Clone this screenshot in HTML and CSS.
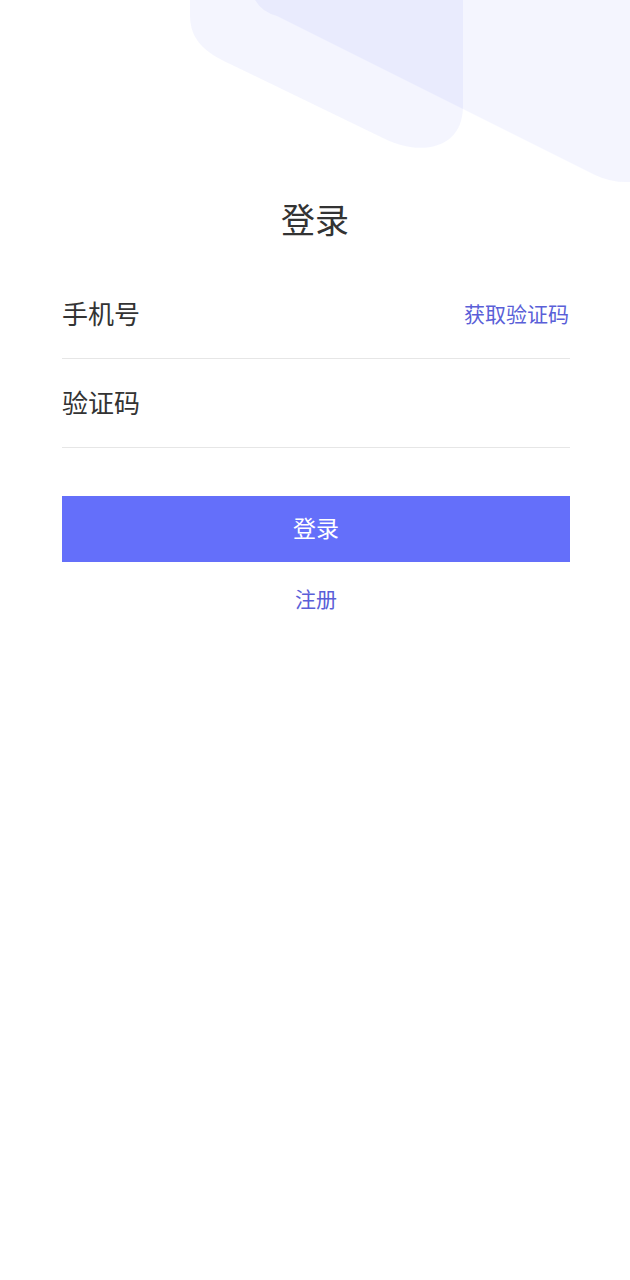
FILE: index.html
```html
<!DOCTYPE html>
<html lang="zh-CN">
<head>
<meta charset="utf-8">
<title>登录</title>
<link rel="stylesheet" href="styles.css">
</head>
<body>
<div class="page">
  <svg class="bg" width="630" height="200" viewBox="0 0 630 200" aria-hidden="true">
    <path class="shape" d="M190,0 L190,15 C190,40 205,52 228,63 L385,139 C420,156 463,150 463,106 L463,0 Z"/>
    <path class="shape" d="M255,0 Q262,12 277,16 L595,175 Q612,183 630,182 L630,0 Z"/>
  </svg>
  <h1 class="title">登录</h1>
  <form class="form">
    <div class="row">
      <span class="label">手机号</span>
      <a class="code-link">获取验证码</a>
    </div>
    <div class="row">
      <span class="label">验证码</span>
    </div>
    <button type="button" class="btn">登录</button>
    <a class="register">注册</a>
  </form>
</div>
</body>
</html>
```

FILE: styles.css
```css
html, body {
  margin: 0;
  padding: 0;
  background: #ffffff;
}
body {
  font-family: "Noto Sans CJK SC", "Noto Sans", sans-serif;
  color: #333333;
}
.page {
  position: relative;
  width: 630px;
  min-height: 1280px;
  overflow: hidden;
}
.bg {
  position: absolute;
  left: 0;
  top: 0;
}
.shape {
  fill: #5d66f0;
  fill-opacity: 0.065;
}
.title {
  position: relative;
  margin: 0;
  padding-top: 202px;
  padding-bottom: 1px;
  font-size: 34px;
  line-height: 34px;
  font-weight: 400;
  text-align: center;
  color: #333333;
}
.form {
  position: relative;
  margin: 33px 60px 0 62px;
  display: flex;
  flex-direction: column;
}
.row {
  height: 88px;
  box-sizing: content-box;
  display: flex;
  align-items: center;
  justify-content: space-between;
  border-bottom: 1px solid #e6e6e6;
}
.label {
  font-size: 26px;
  line-height: 26px;
  color: #333333;
  margin-bottom: 2px;
}
.code-link {
  font-size: 21px;
  line-height: 21px;
  color: #5a5fd8;
  margin-right: 1px;
  margin-bottom: 2px;
}
.btn {
  margin-top: 48px;
  height: 66px;
  border: none;
  background: #646ffa;
  color: #ffffff;
  font-family: inherit;
  font-size: 23px;
  line-height: 23px;
  padding: 0 0 4px 0;
}
.register {
  margin-top: 26px;
  align-self: center;
  font-size: 21px;
  line-height: 21px;
  color: #5a5fd8;
}
```
